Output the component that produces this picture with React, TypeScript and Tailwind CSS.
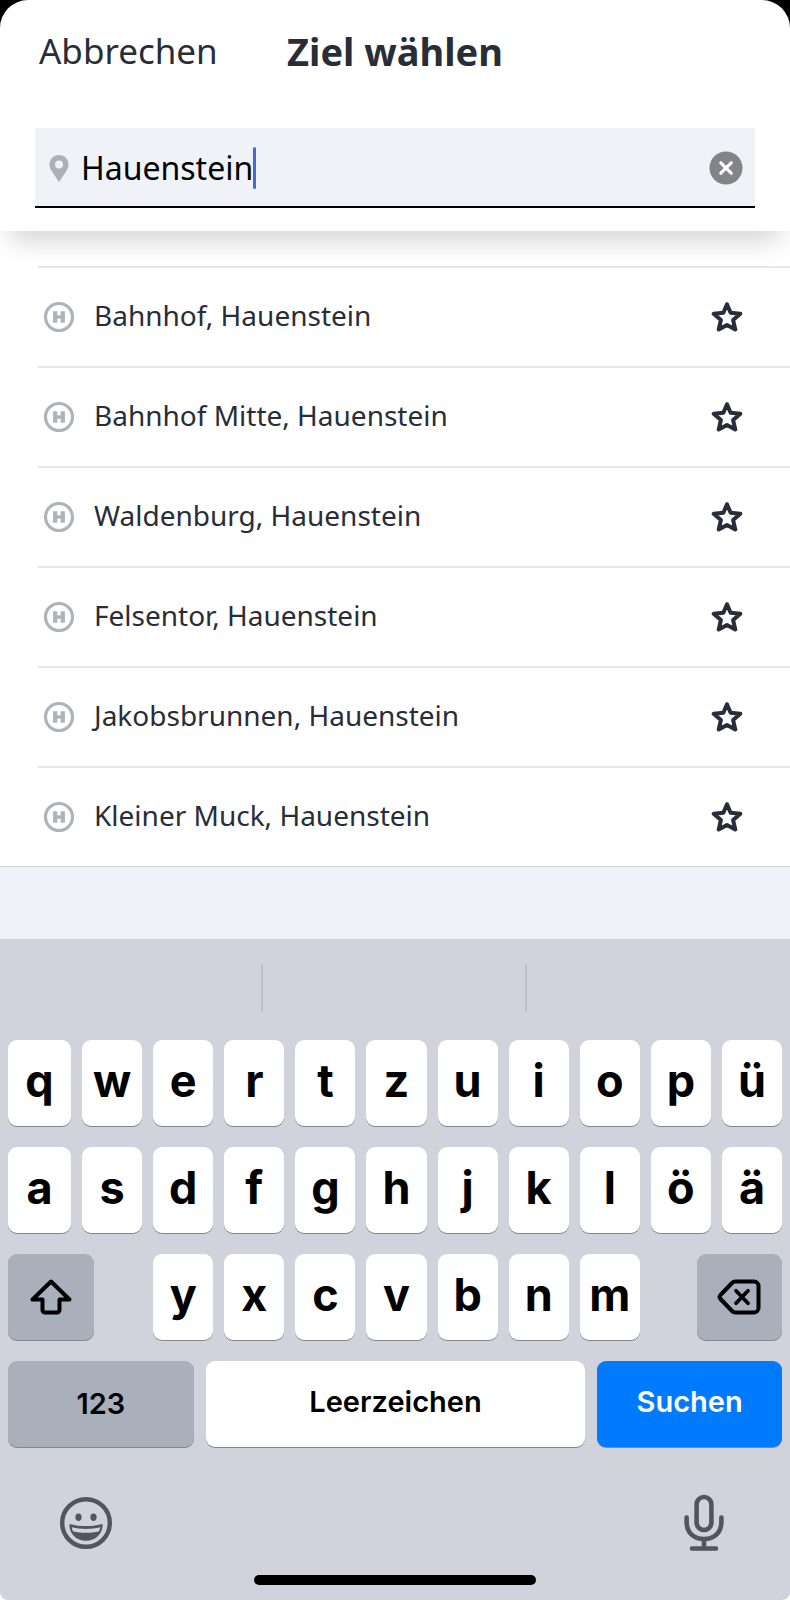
import React, { useState } from 'react';

const stops = [
    "Bahnhof, Hauenstein",
    "Bahnhof Mitte, Hauenstein",
    "Waldenburg, Hauenstein",
    "Felsentor, Hauenstein",
    "Jakobsbrunnen, Hauenstein",
    "Kleiner Muck, Hauenstein",
];

const topRows = ["qwertzuiopü", "asdfghjklöä"];
const bottomRow = "yxcvbnm";

const PinIcon = () => (
    <svg width="20" height="27" viewBox="0 0 20 27" fill="#b0afb6" aria-hidden="true">
        <path fillRule="evenodd" d="M10 0C4.500 0 .5 4.200.5 9.400c0 2.300.8 4.400 2 6.300L10 27l7.500-11.300c1.200-1.900 2-4 2-6.300C19.500 4.200 15.500 0 10 0zm0 13.400a4 4 0 1 1 0-8 4 4 0 0 1 0 8z" />
    </svg>
);

const ClearIcon = () => (
    <svg width="34" height="34" viewBox="0 0 34 34" aria-hidden="true">
        <circle cx="17" cy="17" r="16.5" fill="#838388" />
        <path d="M11.800 11.800l10.400 10.400M22.200 11.800L11.800 22.200" stroke="#fff" strokeWidth="3.200" strokeLinecap="round" />
    </svg>
);

const StopIcon = () => (
    <svg width="32" height="32" viewBox="0 0 32 32" className="shrink-0" aria-hidden="true">
        <circle cx="16" cy="16" r="13.500" fill="none" stroke="#afb2b8" strokeWidth="3.200" />
        <path d="M12.200 10.200v11.600M19.800 10.200v11.600" stroke="#afb2b8" strokeWidth="4.200" />
        <path d="M12 16h8" stroke="#afb2b8" strokeWidth="3.400" />
    </svg>
);

const StarIcon = () => (
    <svg width="32" height="32" viewBox="0 0 32 32" aria-hidden="true">
        <path
            d="M16 3.200l3.600 8.600 9.700.9-7.200 6.300 2.200 9.500-8.300-4.600-8.300 4.600 2.200-9.500-7.200-6.300 9.700-.9z"
            fill="none"
            stroke="#282d37"
            strokeWidth="4"
            strokeLinejoin="round"
        />
    </svg>
);

const ShiftIcon = () => (
    <svg width="42" height="38" viewBox="0 0 42 38" aria-hidden="true">
        <path
            d="M21 3.500L2.500 21.500H12.500V32a2.500 2.500 0 0 0 2.500 2.500h12a2.500 2.500 0 0 0 2.500-2.500V21.500H39.500z"
            fill="none"
            stroke="#000"
            strokeWidth="4"
            strokeLinejoin="round"
        />
    </svg>
);

const BackspaceIcon = () => (
    <svg width="44" height="36" viewBox="0 0 44 36" fill="none" stroke="#000" strokeLinecap="round" strokeLinejoin="round" aria-hidden="true">
        <path d="M18.500 2.500H37A4.500 4.500 0 0 1 41.500 7v22a4.500 4.500 0 0 1-4.500 4.500H18.500a5 5 0 0 1-3.500-1.500L3.500 20a3 3 0 0 1 0-4L15 4a5 5 0 0 1 3.500-1.500z" strokeWidth="4" />
        <path d="M19 11.800l12 12.400M31 11.800l-12 12.400" strokeWidth="3.800" />
    </svg>
);

const EmojiIcon = () => (
    <svg width="52" height="52" viewBox="0 0 52 52" aria-hidden="true">
        <circle cx="26" cy="26" r="23.800" fill="none" stroke="#51555e" strokeWidth="4.400" />
        <ellipse cx="18.500" cy="20.300" rx="3.100" ry="3.700" fill="#51555e" />
        <ellipse cx="33.500" cy="20.300" rx="3.100" ry="3.700" fill="#51555e" />
        <path d="M9.300 28.200c0-.8.6-1.200 1.400-1 10 2.500 20.600 2.500 30.600 0 .8-.2 1.400.2 1.400 1C42.300 37 35.500 43.700 26 43.700S9.700 37 9.300 28.200z" fill="#51555e" />
        <path d="M11.800 30.300c9 2.200 19.400 2.200 28.400 0-.2 1.700-.7 3.200-1.500 4.300-8 1.700-17.400 1.700-25.400 0-.8-1.100-1.300-2.600-1.500-4.300z" fill="#d0d3dc" />
    </svg>
);

const MicIcon = () => (
    <svg width="40" height="58" viewBox="0 0 40 58" fill="none" stroke="#51555e" strokeWidth="4.600" strokeLinecap="round" aria-hidden="true">
        <rect x="12.600" y="3" width="14.800" height="33" rx="7.400" />
        <path d="M2.600 23.500v4C2.600 38.500 9.500 45 20 45s17.400-6.500 17.400-17.500v-4M20 45v9M8 54.500h24" />
    </svg>
);

const keyBase = "flex h-[86px] items-center justify-center rounded-[9px] shadow-[0_1px_0_#85878c]";

const LetterKey = ({ letter }: { letter: string }) => (
    <button type="button" className={`${keyBase} bg-white pb-[6px] text-[45px] leading-none font-bold`}>
        {letter}
    </button>
);

const Keyboard = () => (
    <section aria-label="Tastatur" className="rounded-b-lg bg-[#d0d3dc] px-2 font-['Inter',sans-serif] text-black">
        <div className="-mx-2 grid h-[101px] grid-cols-3 items-center pb-1">
            <div className="h-12 border-r-2 border-[#bcc0c9]" />
            <div className="h-12 border-r-2 border-[#bcc0c9]" />
        </div>

        <div className="grid grid-cols-[63fr_repeat(10,60fr)] gap-x-[11px] gap-y-[21px]">
            {topRows.map((row) => row.split("").map((letter) => <LetterKey key={letter} letter={letter} />))}
            <div className="col-span-2">
                <button type="button" aria-label="Umschalt" className={`${keyBase} w-[64%] bg-[#a9afbb]`}>
                    <ShiftIcon />
                </button>
            </div>
            {bottomRow.split("").map((letter) => <LetterKey key={letter} letter={letter} />)}
            <div className="col-span-2 flex justify-end">
                <button type="button" aria-label="Löschen" className={`${keyBase} w-[65%] bg-[#a9afbb]`}>
                    <BackspaceIcon />
                </button>
            </div>
        </div>

        <div className="mt-[21px] grid grid-cols-[186fr_380fr_185fr] gap-3 text-[29px] font-semibold">
            <button type="button" className={`${keyBase} bg-[#a9afbb]`}>123</button>
            <button type="button" className={`${keyBase} bg-white pb-1`}>Leerzeichen</button>
            <button type="button" className={`${keyBase} bg-[#007aff] pb-1 text-white`}>Suchen</button>
        </div>

        <div className="mt-[47px] flex items-center justify-between pr-[58px] pl-[52px]">
            <button type="button" aria-label="Emoji"><EmojiIcon /></button>
            <button type="button" aria-label="Diktieren"><MicIcon /></button>
        </div>

        <div className="flex justify-center pt-[23px] pb-[15px]">
            <div className="h-[10px] w-[282px] rounded-full bg-black" />
        </div>
    </section>
);

const App = () => {
    const [query, setQuery] = useState("Hauenstein");

    return (
        <div className="bg-white font-['Noto_Sans',sans-serif] text-[#282d37]">
            <div className="bg-black">
                <header className="relative rounded-t-[28px] bg-white px-[35px] pb-[23px] shadow-[0_20px_26px_-10px_rgba(0,0,0,0.17)]">
                    <div className="grid h-32 grid-cols-[1fr_auto_1fr] items-center pb-[26px]">
                        <button type="button" className="justify-self-start pl-1 text-[35px]">Abbrechen</button>
                        <h1 className="text-[38px] font-bold">Ziel wählen</h1>
                    </div>
                    <div className="flex h-20 items-center border-b-2 border-black bg-[#eff2f6] pt-[2px] pr-3 pl-[14px]">
                        <PinIcon />
                        <input
                            type="text"
                            aria-label="Ziel"
                            value={query}
                            onChange={(e) => setQuery(e.target.value)}
                            className="ml-3 field-sizing-content bg-transparent text-[32px] text-black caret-transparent outline-none"
                        />
                        <span className="h-[42px] w-[3px] rounded-full bg-[#4668d8]" />
                        <button type="button" aria-label="Eingabe löschen" className="ml-auto" onClick={() => setQuery("")}>
                            <ClearIcon />
                        </button>
                    </div>
                </header>
            </div>

            <ul className="pt-[35px] pl-[38px]">
                {stops.map((stop) => (
                    <li key={stop} className="flex h-[100px] items-center border-t-2 border-[#e8e8ea] pr-[47px] pl-[5px]">
                        <StopIcon />
                        <span className="ml-[19px] pb-1 text-[28px]">{stop}</span>
                        <button type="button" aria-label={`${stop} merken`} className="ml-auto">
                            <StarIcon />
                        </button>
                    </li>
                ))}
            </ul>
            <div className="h-[73px] border-t border-[#cfd2d6] bg-[#eff2f6]" />

            <Keyboard />
        </div>
    );
};

export default App;
